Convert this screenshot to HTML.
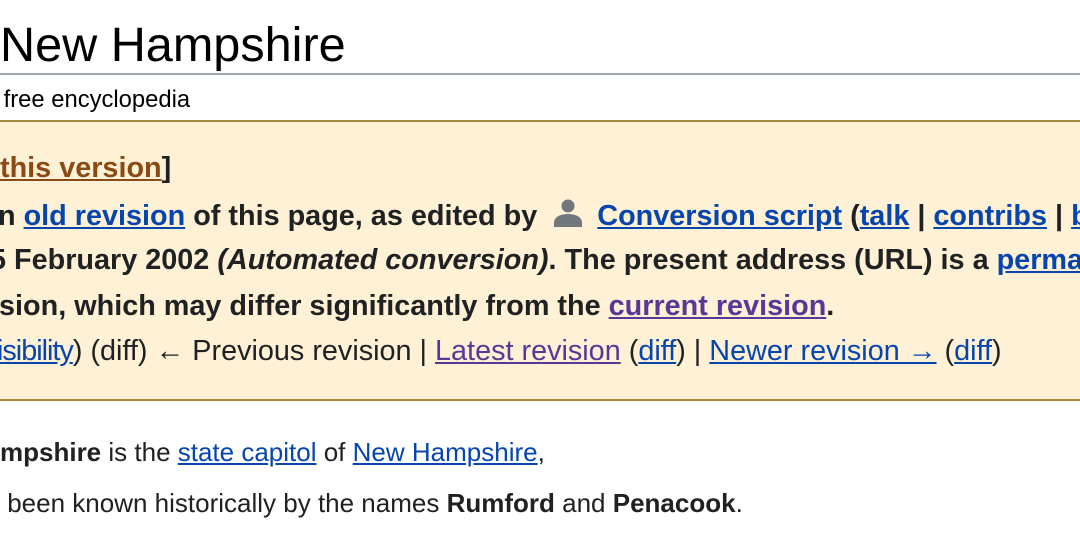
<!DOCTYPE html>
<html><head><meta charset="utf-8"><style>
html,body{margin:0;padding:0;width:1080px;height:558px;overflow:hidden;background:#fff;font-family:"Liberation Sans",Arial,sans-serif;color:#202122;position:relative}
.a{position:absolute;white-space:nowrap;line-height:1}
a{color:#0645ad;text-decoration:underline}
.v{color:#5a3696}
.b{font-weight:bold}
#box{position:absolute;left:-10px;top:120px;width:1100px;height:277px;background:#fef1d6;border-top:2px solid #a88a3e;border-bottom:2px solid #a88a3e}
.t{font-size:28.8px}
</style></head><body>
<div class="a" style="left:0;top:21px;font-size:48.6px;color:#000">New Hampshire</div>
<div style="position:absolute;left:0;top:73px;width:1080px;height:2px;background:#a2a9b1"></div>
<div class="a" style="left:-3px;top:88px;font-size:23.8px;color:#000">&nbsp;free encyclopedia</div>
<div id="box"></div>
<div class="a t b" style="left:0;top:154px"><a style="color:#8b4a13">this version</a>]</div>
<div class="a t b" style="left:-2px;top:198px">n <a>old revision</a> of this page, as edited by <svg width="30" height="30" viewBox="0 0 30 30" style="vertical-align:-3px;margin:0 6px 0 8px"><circle cx="15" cy="8" r="6.5" fill="#72777d"/><path d="M1 29 v-4 c0-6 6-9 14-9 s14 3 14 9 v4 z" fill="#72777d"/></svg> <a>Conversion script</a> (<a>talk</a> | <a>contribs</a> | <a>block</a>)</div>
<div class="a t b" style="left:-10px;top:246px">5 February 2002 <i>(Automated conversion)</i>. The present address (URL) is a <a>permanent link</a></div>
<div class="a t b" style="left:-1px;top:292px">sion, which may differ significantly from the <a class="v">current revision</a>.</div>
<div class="a t" style="left:-3px;top:337px"><a style="letter-spacing:-1px">isibility</a>) (diff) ← Previous revision | <a class="v">Latest revision</a> (<a>diff</a>) | <a>Newer revision →</a> (<a>diff</a>)</div>
<div class="a" style="left:0;top:439px;font-size:26px"><b>mpshire</b> is the <a>state capitol</a> of <a>New Hampshire</a>,</div>
<div class="a" style="left:0;top:490px;font-size:26px">&nbsp;been known historically by the names <b>Rumford</b> and <b>Penacook</b>.</div>
</body></html>
